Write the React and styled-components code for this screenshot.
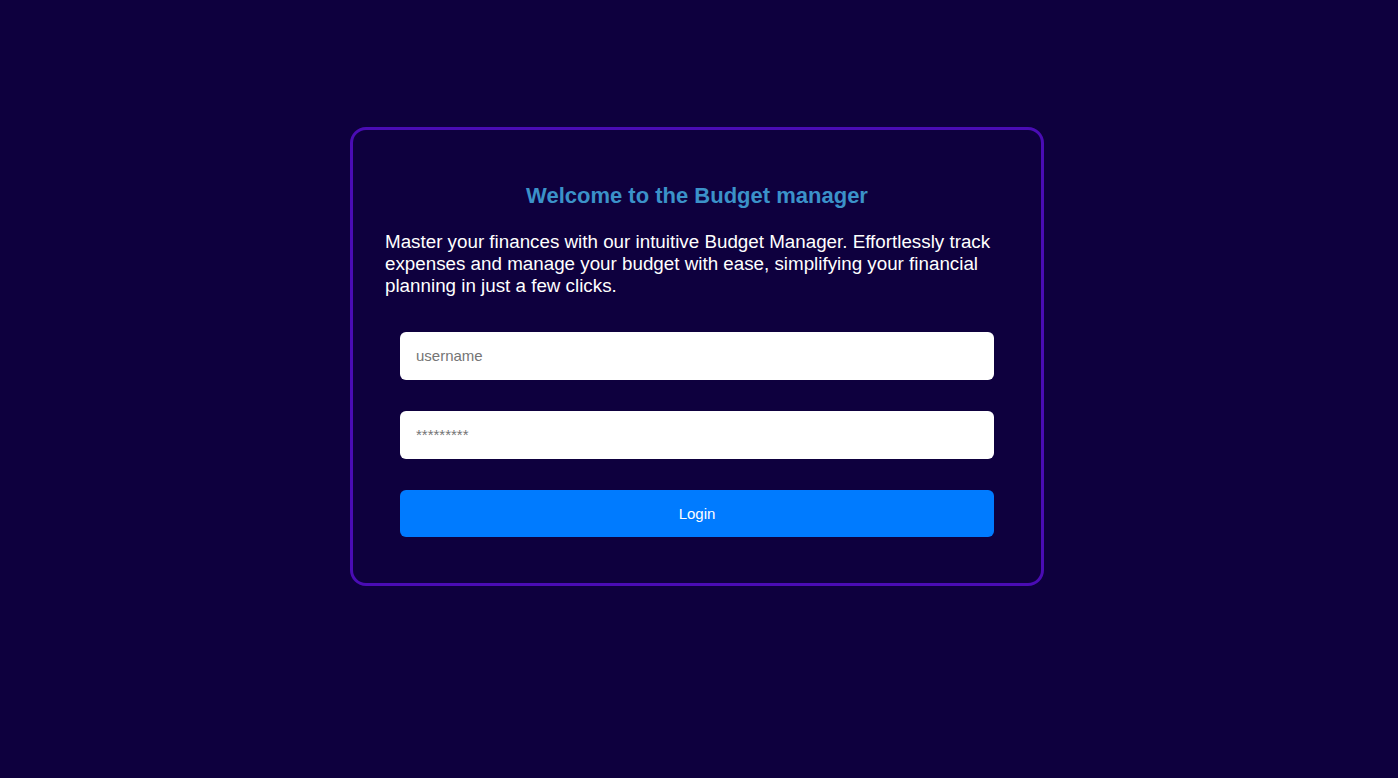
import React from "react";
import styled, { createGlobalStyle } from "styled-components";

const GlobalStyle = createGlobalStyle`
  body {
    margin: 0;
    background-color: #0e003e;
    font-family: "Liberation Sans", Arial, sans-serif;
  }
`;

const Page = styled.div`
  min-height: 778px;
  padding-top: 127px;
  box-sizing: border-box;
`;

const Card = styled.div`
  width: 694px;
  box-sizing: border-box;
  margin-left: calc(50% - 349px);
  border: 3px solid #4a0cb4;
  border-radius: 16px;
  padding: 30px 32px 46px;
`;

const Title = styled.h2`
  margin: 23px 0 22px;
  text-align: center;
  font-size: 22px;
  font-weight: bold;
  color: #3b92c9;
`;

const Intro = styled.p`
  margin: 0 0 35px;
  font-size: 18.8px;
  line-height: 22px;
  color: #ffffff;
`;

const Form = styled.form`
  display: flex;
  flex-direction: column;
  gap: 31.5px;
  padding: 0 15px;
`;

const Input = styled.input`
  height: 47.5px;
  box-sizing: border-box;
  border: none;
  border-radius: 6px;
  padding: 0 16px;
  font-family: "Liberation Sans", Arial, sans-serif;
  font-size: 15px;
  background: #ffffff;
  outline: none;

  &::placeholder {
    color: #757575;
  }
`;

const Button = styled.button`
  height: 47px;
  border: none;
  border-radius: 6px;
  background-color: #007bff;
  color: #ffffff;
  font-family: "Liberation Sans", Arial, sans-serif;
  font-size: 15px;
  cursor: pointer;
`;

const App = () => {
  return (
    <Page>
      <GlobalStyle />
      <Card>
        <Title>Welcome to the Budget manager</Title>
        <Intro>
          Master your finances with our intuitive Budget Manager. Effortlessly
          track expenses and manage your budget with ease, simplifying your
          financial planning in just a few clicks.
        </Intro>
        <Form onSubmit={(e) => e.preventDefault()}>
          <Input type="text" placeholder="username" />
          <Input type="password" placeholder="*********" />
          <Button type="submit">Login</Button>
        </Form>
      </Card>
    </Page>
  );
};

export default App;
